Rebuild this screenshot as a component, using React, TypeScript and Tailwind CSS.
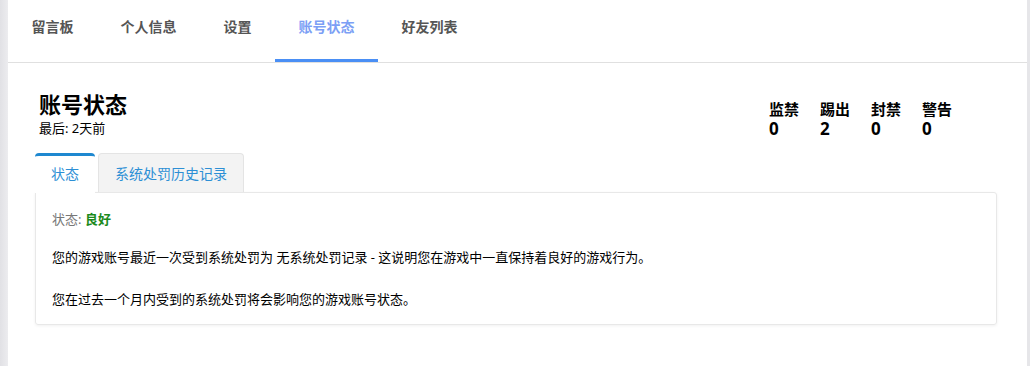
const navItems = ["留言板", "个人信息", "设置", "账号状态", "好友列表"];

const stats = [
  { label: "监禁", value: 0 },
  { label: "踢出", value: 2 },
  { label: "封禁", value: 0 },
  { label: "警告", value: 0 },
];

const font = "font-['Noto_Sans','Noto_Sans_CJK_SC',sans-serif]";

export default function App() {
  return (
    <div className={`flex h-[366px] w-[1030px] overflow-hidden bg-white text-black ${font}`}>
      {/* left rail */}
      <div className="w-2 shrink-0 bg-gradient-to-r from-[#e1e1e5] to-[#ececef]" />

      <div className="flex min-w-0 flex-1 flex-col">
        {/* top navigation */}
        <nav className="flex h-[63px] border-b border-[#e0e0e0]">
          {navItems.map((item) => {
            const active = item === "账号状态";
            return (
              <div
                key={item}
                className={`relative px-[23.5px] pt-[17px] text-[14px] font-semibold leading-[20px] ${
                  active ? "text-[#7c9ff5]" : "text-[#555]"
                }`}
              >
                {item}
                {active && <span className="absolute bottom-0 left-0 right-0 h-[3px] bg-[#4a8ff5]" />}
              </div>
            );
          })}
        </nav>

        <main className="pl-[27px] pr-[30px] pt-[28px]">
          {/* header */}
          <div className="flex items-start justify-between pl-1 pr-[45px]">
            <div>
              <h1 className="text-[22px] font-bold leading-[26px]">账号状态</h1>
              <p className="mt-[3px] text-[13px] leading-[16px]">最后: 2天前</p>
            </div>
            <div className="flex gap-[21px] pt-[8px]">
              {stats.map((s) => (
                <div key={s.label} className="w-[30px]">
                  <div className="text-[15px] font-semibold leading-[20px]">{s.label}</div>
                  <div className="text-[17px] font-bold leading-[20px]">{s.value}</div>
                </div>
              ))}
            </div>
          </div>

          {/* tabs */}
          <div className="mt-[14px] flex items-stretch gap-[3px]">
            <div className="relative z-10 -mb-px rounded-t-[4px] border-t-[3px] border-[#1e88d0] bg-white px-4 pb-[9px] pt-[8px] text-[14px] leading-[20px] text-[#2d8fd5]">
              状态
            </div>
            <div className="flex items-center rounded-t-[4px] border border-b-0 border-[#e4e4e4] bg-[#f3f3f3] px-4 pt-[2px] text-[14px] leading-[20px] text-[#2d8fd5]">
              系统处罚历史记录
            </div>
          </div>

          {/* panel */}
          <div className="rounded-b-[3px] rounded-tr-[3px] border border-[#e8e8e8] px-4 pb-[15px] pt-[16px] text-[13px] leading-[20px] shadow-[0_1px_3px_rgba(0,0,0,0.06)]">
            <p className="text-[#777]">
              状态: <span className="font-bold text-[#1c8a1c]">良好</span>
            </p>
            <p className="mt-[18px]">
              您的游戏账号最近一次受到系统处罚为 无系统处罚记录 - 这说明您在游戏中一直保持着良好的游戏行为。
            </p>
            <p className="mt-[22px]">您在过去一个月内受到的系统处罚将会影响您的游戏账号状态。</p>
          </div>
        </main>
      </div>

      {/* right rail */}
      <div className="w-[3px] shrink-0 bg-[#e6e6e9]" />
    </div>
  );
}
